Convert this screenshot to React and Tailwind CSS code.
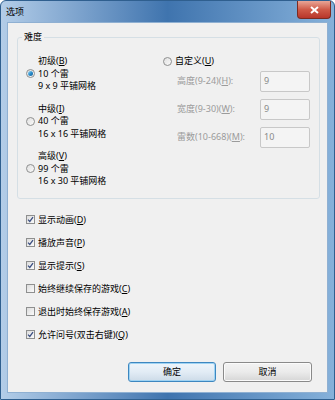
const FONT = { fontFamily: '"Noto Sans", "Noto Sans CJK SC", sans-serif' };

const U = ({ children }) => <span className="underline underline-offset-[1px]">{children}</span>;

const Radio = ({ checked }) => (
  <span className="flex h-[9px] w-[9px] shrink-0 items-center justify-center rounded-full border border-[#8e8f8f] bg-gradient-to-br from-[#e0e0e0] to-[#fafafa]">
    {checked && <span className="h-[5px] w-[5px] rounded-full bg-gradient-to-br from-[#9fe0f5] via-[#2b8fce] to-[#1a5f96]" />}
  </span>
);

const Check = ({ checked }) => (
  <span className="flex h-[9px] w-[9px] shrink-0 items-center justify-center border border-[#8e8f8f] bg-gradient-to-br from-[#dcdcdc] to-[#fbfbfb]">
    {checked && (
      <svg width="7" height="7" viewBox="0 0 7 7">
        <path d="M1 3.6 L2.8 5.4 L6 1.2" fill="none" stroke="#3b4f82" strokeWidth="1.3" />
      </svg>
    )}
  </span>
);

const levels = [
  { name: "初级", key: "B", mines: "10 个雷", grid: "9 x 9 平铺网格", checked: true },
  { name: "中级", key: "I", mines: "40 个雷", grid: "16 x 16 平铺网格" },
  { name: "高级", key: "V", mines: "99 个雷", grid: "16 x 30 平铺网格" },
];

const custom = [
  { label: "高度(9-24)", key: "H", value: "9" },
  { label: "宽度(9-30)", key: "W", value: "9" },
  { label: "雷数(10-668)", key: "M", value: "10" },
];

const options = [
  { label: "显示动画", key: "D", checked: true },
  { label: "播放声音", key: "P", checked: true },
  { label: "显示提示", key: "S", checked: true },
  { label: "始终继续保存的游戏", key: "C" },
  { label: "退出时始终保存游戏", key: "A" },
  { label: "允许问号(双击右键)", key: "Q", checked: true },
];

export default function App() {
  return (
    <div style={FONT} className="relative flex h-[400px] w-[335px] flex-col overflow-hidden rounded-t-[6px] border border-[#2f5f8f] bg-gradient-to-r from-[#b3cde8] via-[#3f74ae] to-[#86b1da] text-[9px] text-black">
      {/* title bar */}
      <div className="flex h-[21px] shrink-0 items-center justify-between pl-[5px]">
        <span className="text-[9px] text-black">选项</span>
        <div className="mb-[3px] mr-[3px] flex h-[18px] w-[34px] items-center justify-center self-start rounded-b-[4px] border border-t-0 border-[#7c2b22] bg-gradient-to-b from-[#e8a597] via-[#cf5a48] to-[#b8352a]">
          <svg width="9" height="8" viewBox="0 0 9 8">
            <path d="M1 1 L8 7 M8 1 L1 7" stroke="#fff" strokeWidth="2" />
          </svg>
        </div>
      </div>

      {/* client area */}
      <div className="mx-[6px] mb-[6px] flex flex-1 flex-col border border-[#8fb0d2] bg-[#f0f0f0]">
        <fieldset className="ml-[9px] mt-[8px] h-[168px] w-[303px] rounded-[3px] border border-[#d5dfe5]">
          <legend className="ml-[4px] px-[2px] leading-[12px]">难度</legend>
          <div className="flex pt-[12px]">
            <div className="flex w-[145px] flex-col gap-[10px] pl-[8px]">
              {levels.map((l) => (
                <div key={l.name} className="flex flex-col leading-[12.5px]">
                  <span className="pl-[12px]">
                    {l.name}(<U>{l.key}</U>)
                  </span>
                  <span className="flex items-center gap-[3px]">
                    <Radio checked={l.checked} />
                    <span>{l.mines}</span>
                  </span>
                  <span className="pl-[12px]">{l.grid}</span>
                </div>
              ))}
            </div>
            <div className="flex flex-col">
              <span className="flex items-center gap-[3px] leading-[12.5px]">
                <Radio />
                <span>
                  自定义(<U>U</U>)
                </span>
              </span>
              <div className="mt-[3px] flex flex-col gap-[7px] pl-[14px]">
                {custom.map((c) => (
                  <div key={c.key} className="flex items-center">
                    <span className="w-[83px] text-[#9b9b9b]">
                      {c.label}(<U>{c.key}</U>):
                    </span>
                    <div className="h-[21px] w-[50px] rounded-[2px] border border-[#c8c8c8] bg-[#f4f4f4] pl-[3px] pt-[3px] leading-[12px] text-[#8a8a8a]">
                      {c.value}
                    </div>
                  </div>
                ))}
              </div>
            </div>
          </div>
        </fieldset>

        <div className="ml-[18px] mt-[9px] flex flex-col">
          {options.map((o) => (
            <div key={o.key} className="flex h-[23px] items-center gap-[3px]">
              <Check checked={o.checked} />
              <span>
                {o.label}(<U>{o.key}</U>)
              </span>
            </div>
          ))}
        </div>

        <div className="mr-[15px] mt-[16px] flex justify-end gap-[7px]">
          <button className="h-[20px] w-[88px] rounded-[3px] border border-[#3d87c0] bg-gradient-to-b from-[#eef5fb] via-[#e2ecf5] to-[#cddbe8] shadow-[inset_0_0_0_1px_#9fd3f3] text-[9px]">
            确定
          </button>
          <button className="h-[20px] w-[89px] rounded-[3px] border border-[#8a8a8a] bg-gradient-to-b from-[#f3f3f3] via-[#ebebeb] to-[#d6d6d6] shadow-[inset_0_0_0_1px_#fbfbfb] text-[9px]">
            取消
          </button>
        </div>
      </div>
    </div>
  );
}
